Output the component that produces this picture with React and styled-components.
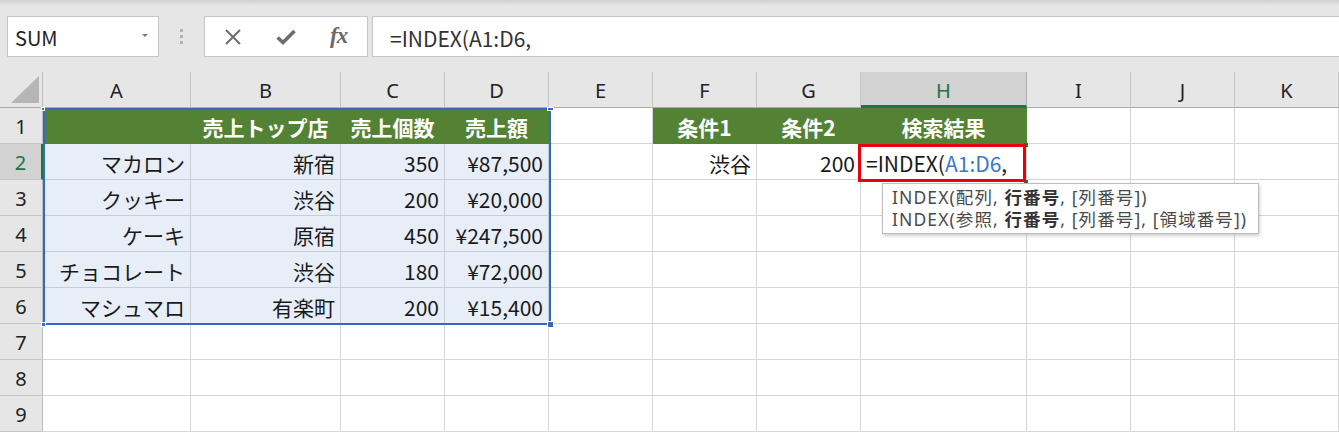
import React from "react";
import styled, { createGlobalStyle } from "styled-components";

const GlobalStyle = createGlobalStyle`
  html, body { margin: 0; padding: 0; background: #ffffff; }
  body { font-family: "Noto Sans CJK JP", "Noto Sans", sans-serif; }
  * { box-sizing: border-box; }
`;

const COLS = [43, 148, 150, 104, 104, 104, 104, 104, 166, 104, 104, 104];
const LETTERS = ["A", "B", "C", "D", "E", "F", "G", "H", "I", "J", "K"];

const Page = styled.div`
  width: 1339px;
  height: 433px;
  overflow: hidden;
  background: #ffffff;
`;

const Toolbar = styled.div`
  height: 72px;
  display: flex;
  align-items: flex-start;
  padding: 16px 0 0 7px;
  background: linear-gradient(#cfcfcf 0px, #e4e4e4 5px, #e6e6e6 8px);
`;

const NameBox = styled.div`
  width: 152px;
  height: 41px;
  background: #ffffff;
  border: 1px solid #c6c6c6;
  display: flex;
  align-items: center;
  justify-content: space-between;
  padding: 2px 10px 0 7px;
  font-size: 20px;
  color: #222;
  font-family: "Noto Sans CJK JP", "Noto Sans", sans-serif;
`;

const DropArrow = styled.span`
  width: 0;
  height: 0;
  border-left: 3px solid transparent;
  border-right: 3px solid transparent;
  border-top: 3px solid #7a7a7a;
  margin-bottom: 4px;
`;

const Grip = styled.div`
  width: 45px;
  height: 41px;
  display: flex;
  flex-direction: column;
  align-items: center;
  justify-content: center;
  gap: 3px;
`;

const GripDot = styled.span`
  width: 3px;
  height: 3px;
  background: #b3b3b3;
`;

const ButtonBox = styled.div`
  width: 164px;
  height: 41px;
  background: #ffffff;
  border: 1px solid #c6c6c6;
  display: flex;
  align-items: center;
  justify-content: space-around;
  padding: 0 2px;
`;

const IconSlot = styled.span`
  width: 30px;
  height: 30px;
  display: flex;
  align-items: center;
  justify-content: center;
  color: #6e6e6e;
`;

const Fx = styled.span`
  font-family: "Liberation Serif", "DejaVu Serif", serif;
  font-style: italic;
  font-weight: 700;
  font-size: 23px;
  line-height: 1;
  color: #6a6a6a;
  letter-spacing: -1px;
  margin-top: -2px;
`;

const FormulaBox = styled.div`
  flex: 1;
  height: 41px;
  margin-left: 4px;
  background: #ffffff;
  border: 1px solid #c6c6c6;
  border-right: none;
  display: flex;
  align-items: center;
  padding: 2px 0 0 17px;
  font-size: 21px;
  color: #333;
  font-family: "Noto Sans CJK JP", "Noto Sans", sans-serif;
`;

const Sheet = styled.div`
  position: relative;
  display: grid;
  grid-template-columns: ${COLS.map((c) => c + "px").join(" ")};
  grid-auto-rows: 36px;
`;

const Corner = styled.div`
  background: #e6e6e6;
  border-right: 1px solid #bdbdbd;
  border-bottom: 1px solid #ababab;
  display: flex;
  align-items: flex-end;
  justify-content: flex-end;
  padding: 0 3px 4px 0;
`;

const Triangle = styled.span`
  width: 0;
  height: 0;
  border-left: 28px solid transparent;
  border-bottom: 27px solid #b6b6b6;
`;

const ColHeader = styled.div`
  background: ${(p) => (p.$active ? "#d2d2d2" : "#e6e6e6")};
  border-right: 1px solid ${(p) => (p.$active ? "#ababab" : "#c4c4c4")};
  border-bottom: ${(p) => (p.$active ? "3px solid #217346" : "1px solid #ababab")};
  color: ${(p) => (p.$active ? "#217346" : "#222")};
  font-family: "Noto Sans", sans-serif;
  font-size: 20px;
  display: flex;
  align-items: center;
  justify-content: center;
  padding-top: ${(p) => (p.$active ? "3px" : "1px")};
`;

const RowHeader = styled.div`
  background: ${(p) => (p.$active ? "#d2d2d2" : "#e6e6e6")};
  border-right: ${(p) => (p.$active ? "2px solid #217346" : "1px solid #bdbdbd")};
  border-bottom: 1px solid #c4c4c4;
  color: ${(p) => (p.$active ? "#217346" : "#222")};
  font-family: "Noto Sans", sans-serif;
  font-size: 20px;
  display: flex;
  align-items: center;
  justify-content: center;
  padding-top: 1px;
`;

const FILLS = {
  green: { bg: "#548235", line: "#548235", color: "#ffffff" },
  blue: { bg: "#e7eef8", line: "#c9ced6", color: "#1a1a1a" },
  none: { bg: "#ffffff", line: "#d6d6d6", color: "#1a1a1a" },
};

const Cell = styled.div`
  background: ${(p) => FILLS[p.$fill].bg};
  border-right: 1px solid ${(p) => FILLS[p.$fill].line};
  border-bottom: 1px solid ${(p) => FILLS[p.$fill].line};
  color: ${(p) => FILLS[p.$fill].color};
  font-weight: ${(p) => (p.$bold ? 700 : 400)};
  font-size: 21px;
  display: flex;
  align-items: center;
  justify-content: ${(p) => p.$align};
  padding: 2px 5px 0 5px;
  white-space: nowrap;
  overflow: visible;
`;

const Ref = styled.span`
  color: #3b78c9;
`;

const RangeFrame = styled.div`
  position: absolute;
  left: 43px;
  top: 36px;
  width: 508px;
  height: 217px;
  border: 2px solid #3568c4;
  pointer-events: none;
`;

const Handle = styled.span`
  position: absolute;
  width: ${(p) => p.$w}px;
  height: ${(p) => p.$h}px;
  background: #3568c4;
  border: 1px solid #ffffff;
`;

const RedBox = styled.div`
  position: absolute;
  left: 858px;
  top: 72px;
  width: 168px;
  height: 38px;
  border: 3px solid #e8000b;
`;

const ActiveMark = styled.span`
  position: absolute;
  width: 4px;
  height: 4px;
  background: #217346;
`;

const Tooltip = styled.div`
  position: absolute;
  left: 882px;
  top: 111px;
  width: 377px;
  height: 51px;
  background: #ffffff;
  border: 1px solid #bcbcbc;
  box-shadow: 1px 2px 3px rgba(0, 0, 0, 0.18);
  padding: 2px 0 0 9px;
  font-family: "Noto Sans", "Noto Sans CJK JP", sans-serif;
  font-size: 17.5px;
  letter-spacing: 1.1px;
  line-height: 22px;
  color: #4a4a4a;
  white-space: nowrap;
`;

const TipLine = styled.div``;

const Strong = styled.b`
  font-weight: 700;
  color: #333;
`;

const formula = (
  <>
    =INDEX(<Ref>A1:D6</Ref>,
  </>
);

const DATA = [
  ["", "売上トップ店", "売上個数", "売上額", "", "条件1", "条件2", "検索結果", "", "", ""],
  ["マカロン", "新宿", "350", "¥87,500", "", "渋谷", "200", "FORMULA", "", "", ""],
  ["クッキー", "渋谷", "200", "¥20,000", "", "", "", "", "", "", ""],
  ["ケーキ", "原宿", "450", "¥247,500", "", "", "", "", "", "", ""],
  ["チョコレート", "渋谷", "180", "¥72,000", "", "", "", "", "", "", ""],
  ["マシュマロ", "有楽町", "200", "¥15,400", "", "", "", "", "", "", ""],
  ["", "", "", "", "", "", "", "", "", "", ""],
  ["", "", "", "", "", "", "", "", "", "", ""],
  ["", "", "", "", "", "", "", "", "", "", ""],
];

function fillFor(r, c) {
  if (r === 0 && (c <= 3 || (c >= 5 && c <= 7))) return "green";
  if (r >= 1 && r <= 5 && c <= 3) return "blue";
  return "none";
}

export default function App() {
  return (
    <Page>
      <GlobalStyle />
      <Toolbar>
        <NameBox>
          <span>SUM</span>
          <DropArrow />
        </NameBox>
        <Grip>
          <GripDot />
          <GripDot />
          <GripDot />
        </Grip>
        <ButtonBox>
          <IconSlot>
            <svg width="18" height="18" viewBox="0 0 18 18">
              <path d="M2 2 L16 16 M16 2 L2 16" stroke="#6e6e6e" strokeWidth="2" fill="none" />
            </svg>
          </IconSlot>
          <IconSlot>
            <svg width="20" height="16" viewBox="0 0 20 16">
              <path d="M1.5 8.5 L7 13.5 L18.5 2" stroke="#6e6e6e" strokeWidth="3.6" fill="none" strokeLinejoin="miter" />
            </svg>
          </IconSlot>
          <IconSlot>
            <Fx>fx</Fx>
          </IconSlot>
        </ButtonBox>
        <FormulaBox>=INDEX(A1:D6,</FormulaBox>
      </Toolbar>
      <Sheet>
        <Corner>
          <Triangle />
        </Corner>
        {LETTERS.map((l) => (
          <ColHeader key={l} $active={l === "H"}>
            {l}
          </ColHeader>
        ))}
        {DATA.map((row, r) => (
          <React.Fragment key={r}>
            <RowHeader $active={r === 1}>{r + 1}</RowHeader>
            {row.map((v, c) => {
              const fill = fillFor(r, c);
              const isFormula = v === "FORMULA";
              return (
                <Cell
                  key={c}
                  $fill={fill}
                  $bold={fill === "green"}
                  $align={fill === "green" ? "center" : isFormula ? "flex-start" : "flex-end"}
                >
                  {isFormula ? formula : v}
                </Cell>
              );
            })}
          </React.Fragment>
        ))}
        <RangeFrame />
        <Handle $w={4} $h={4} style={{ left: 41, top: 35 }} />
        <Handle $w={7} $h={4} style={{ left: 547, top: 35 }} />
        <Handle $w={7} $h={7} style={{ left: 547, top: 249 }} />
        <Handle $w={5} $h={5} style={{ left: 41, top: 250 }} />
        <ActiveMark style={{ left: 1024, top: 71 }} />
        <ActiveMark style={{ left: 1024, top: 108 }} />
        <RedBox />
        <Tooltip>
          <TipLine>
            INDEX(配列, <Strong>行番号</Strong>, [列番号])
          </TipLine>
          <TipLine>
            INDEX(参照, <Strong>行番号</Strong>, [列番号], [領域番号])
          </TipLine>
        </Tooltip>
      </Sheet>
    </Page>
  );
}
